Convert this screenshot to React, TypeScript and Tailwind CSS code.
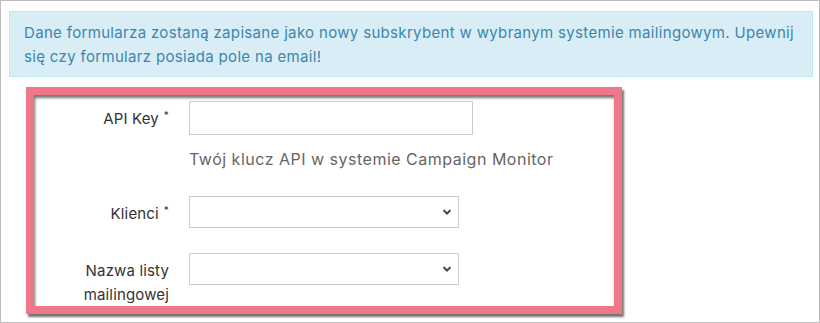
import React from 'react';

const FONT = { fontFamily: 'Inter, "Noto Sans", "Liberation Sans", sans-serif' };

// chevron used by the native-looking selects
const Chevron: React.FC = () => (
  <svg
    width="10"
    height="7"
    viewBox="0 0 10 7"
    className="pointer-events-none absolute right-[7px] top-1/2 -translate-y-1/2"
  >
    <path d="M1.5 1.6 L5 5 L8.5 1.6" fill="none" stroke="#444" strokeWidth="2" />
  </svg>
);

const Label: React.FC<{ text: string; required?: boolean }> = ({ text, required }) => (
  <label className="w-[135px] shrink-0 pt-[6px] text-right text-[15px] leading-6 tracking-[0.15px] text-[#333]">
    {text}
    {required && <sup className="ml-[5px] text-[10px] text-[#333]">*</sup>}
  </label>
);

const SelectBox: React.FC = () => (
  <div className="relative w-[270px]">
    <select className="h-[32px] w-full appearance-none border border-[#ccc] bg-white px-2 text-[15px] text-[#333] outline-none">
      <option value=""></option>
    </select>
    <Chevron />
  </div>
);

export default function App() {
  return (
    <div style={FONT} className="h-[323px] w-[820px] overflow-hidden border border-[#bdbdbd] bg-white">
      {/* info alert */}
      <div className="ml-[8px] mr-[6px] mt-[10px] border border-[#bce8f1] bg-[#d9edf7] pb-[7px] pl-[14px] pr-[4px] pt-[9px] text-[15px] leading-6 tracking-[0.33px] text-[#3a87ad]">
        <span className="whitespace-nowrap">
          Dane formularza zostaną zapisane jako nowy subskrybent w wybranym systemie mailingowym. Upewnij
        </span>
        <br />
        się czy formularz posiada pole na email!
      </div>

      {/* highlighted form */}
      <div className="ml-[25px] mt-[10px] h-[227px] w-[596px] border-[8px] border-[#ef7788] bg-white shadow-[2px_3px_2px_rgba(0,0,0,0.55),inset_1px_3px_3px_rgba(0,0,0,0.55)]">
        <div className="flex flex-col gap-[25px] pt-[6px]">
          <div className="flex gap-[20px]">
            <Label text="API Key" required />
            <div className="flex flex-col">
              <input type="text" className="h-[34px] w-[284px] border border-[#ccc] bg-white px-2 outline-none" />
              <p className="mt-[12px] whitespace-nowrap text-[16px] leading-6 tracking-[0.5px] text-[#666]">
                Twój klucz API w systemie Campaign Monitor
              </p>
            </div>
          </div>

          <div className="flex gap-[20px]">
            <Label text="Klienci" required />
            <SelectBox />
          </div>

          <div className="flex gap-[20px]">
            <Label text="Nazwa listy mailingowej" />
            <div className="self-start">
              <SelectBox />
            </div>
          </div>
        </div>
      </div>
    </div>
  );
}
